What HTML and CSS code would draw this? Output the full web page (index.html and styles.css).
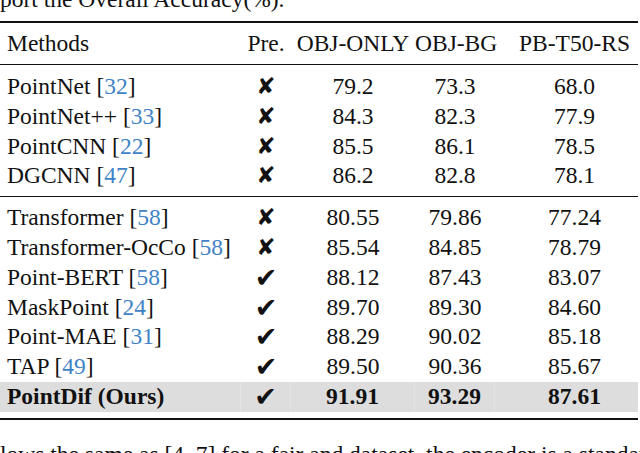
FILE: index.html
```html
<!DOCTYPE html>
<html>
<head>
<meta charset="utf-8">
<link rel="stylesheet" href="styles.css">
</head>
<body>
<p class="caption">port the Overall Accuracy(%).</p>
<div class="table">
  <div class="row head">
    <div class="c m">Methods</div>
    <div class="c">Pre.</div>
    <div class="c">OBJ-ONLY</div>
    <div class="c">OBJ-BG</div>
    <div class="c last">PB-T50-RS</div>
  </div>
  <div class="group g1">
    <div class="row"><div class="c m">PointNet [<span class="cite">32</span>]</div><div class="c mark no">✘</div><div class="c">79.2</div><div class="c">73.3</div><div class="c last">68.0</div></div>
    <div class="row"><div class="c m">PointNet++ [<span class="cite">33</span>]</div><div class="c mark no">✘</div><div class="c">84.3</div><div class="c">82.3</div><div class="c last">77.9</div></div>
    <div class="row"><div class="c m">PointCNN [<span class="cite">22</span>]</div><div class="c mark no">✘</div><div class="c">85.5</div><div class="c">86.1</div><div class="c last">78.5</div></div>
    <div class="row"><div class="c m">DGCNN [<span class="cite">47</span>]</div><div class="c mark no">✘</div><div class="c">86.2</div><div class="c">82.8</div><div class="c last">78.1</div></div>
  </div>
  <div class="group g2">
    <div class="row"><div class="c m">Transformer [<span class="cite">58</span>]</div><div class="c mark no">✘</div><div class="c">80.55</div><div class="c">79.86</div><div class="c last">77.24</div></div>
    <div class="row"><div class="c m">Transformer-OcCo [<span class="cite">58</span>]</div><div class="c mark no">✘</div><div class="c">85.54</div><div class="c">84.85</div><div class="c last">78.79</div></div>
    <div class="row"><div class="c m">Point-BERT [<span class="cite">58</span>]</div><div class="c mark yes">✔</div><div class="c">88.12</div><div class="c">87.43</div><div class="c last">83.07</div></div>
    <div class="row"><div class="c m">MaskPoint [<span class="cite">24</span>]</div><div class="c mark yes">✔</div><div class="c">89.70</div><div class="c">89.30</div><div class="c last">84.60</div></div>
    <div class="row"><div class="c m">Point-MAE [<span class="cite">31</span>]</div><div class="c mark yes">✔</div><div class="c">88.29</div><div class="c">90.02</div><div class="c last">85.18</div></div>
    <div class="row"><div class="c m">TAP [<span class="cite">49</span>]</div><div class="c mark yes">✔</div><div class="c">89.50</div><div class="c">90.36</div><div class="c last">85.67</div></div>
    <div class="row ours"><div class="c m">PointDif (Ours)</div><div class="c mark yes">✔</div><div class="c">91.91</div><div class="c">93.29</div><div class="c last">87.61</div></div>
  </div>
</div>
<p class="after">lows the same as [4, 7] for a fair and dataset, the encoder is a standard</p>
</body>
</html>
```
FILE: styles.css
```css
html, body {
  margin: 0;
  padding: 0;
  background: #fff;
  overflow: hidden;
}
body {
  width: 640px;
  height: 453px;
  font-family: "Liberation Serif", "Times New Roman", serif;
  font-size: 23.5px;
  color: #111;
}
.caption {
  margin: -14px 0 0 0;
  line-height: 26px;
  height: 26px;
  white-space: nowrap;
}
.table {
  width: 638px;
  margin-top: 9px;
  border-top: 2px solid #111;
  border-bottom: 2px solid #111;
}
.row {
  display: grid;
  grid-template-columns: 241px 50px 124px 80px 1fr;
  height: 29.8px;
  line-height: 29.8px;
}
.row.head {
  height: 41px;
  line-height: 41px;
  border-bottom: 1px solid #111;
}
.c {
  text-align: center;
  white-space: nowrap;
}
.c.m {
  text-align: left;
  padding-left: 7px;
}
.c.last {
  padding-left: 16px;
}
.cite {
  color: #3f83c6;
}
.mark {
  font-family: "DejaVu Sans", sans-serif;
}
.mark.no {
  font-size: 23px;
}
.mark.yes {
  font-size: 27px;
}
.group.g1 {
  padding: 7px 0 5px 0;
  border-bottom: 1px solid #111;
}
.group.g2 {
  padding: 6px 0 6px 0;
}
.ours {
  background: #dddddd;
  font-weight: bold;
}
.ours .c {
  border-right: 1px solid #e4e4e4;
}
.ours .c.last {
  border-right: none;
}
.after {
  margin: 21px 0 0 0;
  line-height: 26px;
  white-space: nowrap;
}
```
